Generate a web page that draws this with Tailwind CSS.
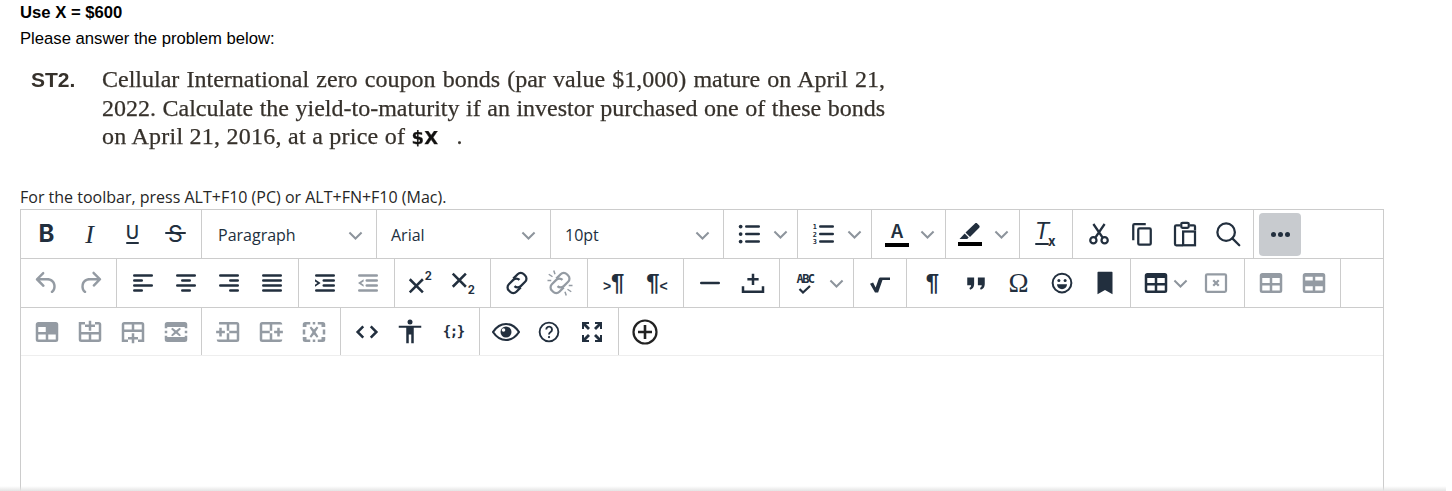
<!DOCTYPE html>
<html lang="en">
<head>
    <meta charset="UTF-8">
    <title>Use X = $600</title>
    <script src="https://cdn.jsdelivr.net/npm/@tailwindcss/browser@4"></script>
</head>
<body class="relative h-[491px] overflow-hidden bg-white text-black font-['Liberation_Sans',sans-serif]">

<!-- question text -->
<div class="pl-5 pt-px">
    <p class="h-6 leading-6 text-[16.67px] font-bold">Use X = $600</p>
    <p class="mt-[2px] h-6 leading-6 text-[16.67px]">Please answer the problem below:</p>
</div>

<!-- problem scan -->
<div class="mt-[14px] ml-[31px] flex h-[90px] text-[#36312b] blur-[0.3px]">
    <div class="w-[71px] pt-[1px] leading-[28px] text-[21px] font-bold">ST2.</div>
    <div class="w-[783px] font-['Liberation_Serif',serif] text-[24px] leading-[28.5px] [-webkit-text-stroke:0.25px_#36312b]">
        <p class="[text-align-last:justify]">Cellular International zero coupon bonds (par value $1,000) mature on April 21,</p>
        <p class="[text-align-last:justify]">2022. Calculate the yield-to-maturity if an investor purchased one of these bonds</p>
        <p class="tracking-[0.25px]">on April 21, 2016, at a price of <b class="font-['DejaVu_Sans',sans-serif] text-[18px] text-[#111]">$X</b><span class="ml-[18px]">.</span></p>
    </div>
</div>

<p class="mt-[30px] ml-5 h-6 leading-6 text-base font-['Open_Sans',sans-serif] text-[#262626]">For the toolbar, press ALT+F10 (PC) or ALT+FN+F10 (Mac).</p>

<!-- editor -->
<div class="ml-5 w-[1364px] h-[282px] border border-b-0 border-[#ccc] text-[#222f3e]">

    <!-- row 1 -->
    <div class="flex h-[49px] border-b border-[#ccc]">
        <div class="flex items-center w-[181px] px-1 border-r border-[#ccc]">
            <span class="w-[43.3px] flex justify-center text-[24px] font-bold font-['Inter',sans-serif]">B</span>
            <span class="w-[43.3px] flex justify-center text-[26px] italic font-['Liberation_Serif',serif]">I</span>
            <span class="w-[43.3px] flex flex-col items-center text-[18px] leading-[17px] font-medium font-['Inter',sans-serif]">U<i class="w-[13px] h-[2.5px] mt-[1px] rounded-sm bg-[#222f3e]"></i></span>
            <span class="relative w-[43.3px] flex justify-center text-[23px] font-['Inter',sans-serif]">S<i class="absolute left-[11px] top-[15px] w-[21px] h-[2px] rounded-sm bg-[#222f3e]"></i></span>
        </div>
        <div class="flex items-center justify-between w-[175px] pl-4 pr-3 pt-[2px] border-r border-[#ccc] font-['Open_Sans',sans-serif] text-base">
            <span>Paragraph</span>
            <svg width="17" height="17" viewBox="0 0 14 14" fill="none" stroke="#8d949c" stroke-width="1.6"><path d="M2 4.5l5 5 5-5"/></svg>
        </div>
        <div class="flex items-center justify-between w-[174px] pl-[14px] pr-[13px] pt-[2px] border-r border-[#ccc] font-['Open_Sans',sans-serif] text-base">
            <span>Arial</span>
            <svg width="17" height="17" viewBox="0 0 14 14" fill="none" stroke="#8d949c" stroke-width="1.6"><path d="M2 4.5l5 5 5-5"/></svg>
        </div>
        <div class="flex items-center justify-between w-[173px] pl-[14px] pr-3 pt-[2px] border-r border-[#ccc] font-['Open_Sans',sans-serif] text-base">
            <span>10pt</span>
            <svg width="17" height="17" viewBox="0 0 14 14" fill="none" stroke="#8d949c" stroke-width="1.6"><path d="M2 4.5l5 5 5-5"/></svg>
        </div>
        <div class="flex items-center w-[74px] pl-[11px] border-r border-[#ccc]">
            <svg width="30" height="30" viewBox="0 0 24 24" fill="currentColor"><circle cx="4.500" cy="6" r="1.500"/><circle cx="4.500" cy="12" r="1.500"/><circle cx="4.500" cy="18" r="1.500"/><rect x="8" y="5" width="12" height="2" rx="1"/><rect x="8" y="11" width="12" height="2" rx="1"/><rect x="8" y="17" width="12" height="2" rx="1"/></svg>
            <svg class="ml-[7px]" width="17" height="17" viewBox="0 0 14 14" fill="none" stroke="#8d949c" stroke-width="1.6"><path d="M2 4.5l5 5 5-5"/></svg>
        </div>
        <div class="flex items-center w-[74px] pl-[11px] border-r border-[#ccc]">
            <svg width="30" height="30" viewBox="0 0 24 24" fill="currentColor"><rect x="8" y="5" width="12" height="2" rx="1"/><rect x="8" y="11" width="12" height="2" rx="1"/><rect x="8" y="17" width="12" height="2" rx="1"/><text x="3" y="8" font-size="5.500" font-weight="700" font-family="DejaVu Sans Mono">1</text><text x="3" y="14" font-size="5.500" font-weight="700" font-family="DejaVu Sans Mono">2</text><text x="3" y="20" font-size="5.500" font-weight="700" font-family="DejaVu Sans Mono">3</text></svg>
            <svg class="ml-[7px]" width="17" height="17" viewBox="0 0 14 14" fill="none" stroke="#8d949c" stroke-width="1.6"><path d="M2 4.5l5 5 5-5"/></svg>
        </div>
        <div class="flex items-center w-[74px] pl-[13px] border-r border-[#ccc]">
            <span class="relative w-6 h-[25px] flex justify-center">
                <span class="text-[18px] leading-[20px] font-semibold font-['Inter',sans-serif]">A</span>
                <span class="absolute left-0 bottom-0 w-6 h-1 bg-black"></span>
            </span>
            <svg class="ml-[10px]" width="17" height="17" viewBox="0 0 14 14" fill="none" stroke="#8d949c" stroke-width="1.6"><path d="M2 4.5l5 5 5-5"/></svg>
        </div>
        <div class="flex items-center w-[74px] pl-3 border-r border-[#ccc]">
            <svg width="24" height="24" viewBox="0 0 24 24" fill="currentColor"><path d="M17 1.500c.6-.6 1.600-.6 2.200 0l2 2c.6.600.6 1.600 0 2.200L12 15l-4.500-4.500z"/><path d="M6.700 11.500l4 4-1.500 1.500H1.500z"/><rect x="0" y="20" width="24" height="4" fill="#000"/></svg>
            <svg class="ml-[11px]" width="17" height="17" viewBox="0 0 14 14" fill="none" stroke="#8d949c" stroke-width="1.6"><path d="M2 4.5l5 5 5-5"/></svg>
        </div>
        <div class="relative flex items-center justify-center w-[53px] border-r border-[#ccc]">
            <span class="absolute left-[15px] top-[8px] text-[23px] leading-[26px] italic font-['Liberation_Sans',sans-serif]">T</span>
            <i class="absolute left-[15px] top-[33px] w-[14px] h-[2px] rounded-sm bg-[#222f3e]"></i>
            <span class="absolute left-[28px] top-[24px] text-[13px] leading-[14px] font-bold font-['Inter',sans-serif]">x</span>
        </div>
        <div class="flex items-center w-[181px] px-1 border-r border-[#ccc]">
            <span class="w-[43.3px] flex justify-center"><svg width="30" height="30" viewBox="0 0 24 24" fill="none" stroke="currentColor" stroke-width="1.800"><circle cx="7.500" cy="17" r="2.500"/><circle cx="16.500" cy="17" r="2.500"/><path d="M9 15L16.500 4M15 15L7.500 4"/></svg></span>
            <span class="w-[43.3px] flex justify-center"><svg width="30" height="30" viewBox="0 0 24 24" fill="none" stroke="currentColor" stroke-width="1.800"><path d="M15 4H6a1 1 0 0 0-1 1v12"/><rect x="9" y="7.500" width="10" height="13" rx="1"/></svg></span>
            <span class="w-[43.3px] flex justify-center"><svg width="30" height="30" viewBox="0 0 24 24" fill="none" stroke="currentColor" stroke-width="1.800"><path d="M8 5H5a1 1 0 0 0-1 1v14a1 1 0 0 0 1 1h5M16 5h3a1 1 0 0 1 1 1v3"/><rect x="9" y="3" width="6" height="4" rx="1"/><rect x="10.500" y="10" width="9.500" height="11"/></svg></span>
            <span class="w-[43.3px] flex justify-center"><svg width="30" height="30" viewBox="0 0 24 24" fill="none" stroke="currentColor" stroke-width="1.800"><circle cx="10.500" cy="10.500" r="7"/><path d="M15.500 15.500l5.500 5.500" stroke-linecap="round"/></svg></span>
        </div>
        <div class="flex items-center pl-[5px]">
            <span class="w-[42px] h-[43px] flex items-center justify-center gap-[2px] rounded bg-[#c8cbcf]">
                <i class="w-[5px] h-[5px] rounded-full bg-[#222f3e]"></i><i class="w-[5px] h-[5px] rounded-full bg-[#222f3e]"></i><i class="w-[5px] h-[5px] rounded-full bg-[#222f3e]"></i>
            </span>
        </div>
    </div>

    <!-- row 2 -->
    <div class="flex h-[49px] border-b border-[#ccc]">
        <div class="flex items-center w-[96px] px-1 border-r border-[#ccc] text-[#949ba3]">
            <span class="w-[43.3px] flex justify-center"><svg width="30" height="30" viewBox="0 0 24 24" fill="currentColor"><path d="M6.400 8H12c3.700 0 6.200 2 6.800 5.100.6 2.700-.4 5.600-2.300 6.800a1 1 0 0 1-1-1.800c1.100-.6 1.800-2.700 1.400-4.600-.5-2.100-2.100-3.500-4.900-3.500H6.400l3.300 3.300a1 1 0 1 1-1.400 1.400l-5-5a1 1 0 0 1 0-1.400l5-5a1 1 0 0 1 1.400 1.400L6.400 8z"/></svg></span>
            <span class="w-[43.3px] flex justify-center"><svg width="30" height="30" viewBox="0 0 24 24" fill="currentColor"><path d="M17.600 10H12c-2.800 0-4.400 1.400-4.900 3.500-.4 2 .3 4 1.400 4.600a1 1 0 1 1-1 1.800c-2-1.200-2.900-4.100-2.300-6.800.6-3 3-5.100 6.800-5.100h5.600l-3.300-3.300a1 1 0 1 1 1.400-1.400l5 5a1 1 0 0 1 0 1.400l-5 5a1 1 0 0 1-1.400-1.400l3.300-3.300z"/></svg></span>
        </div>
        <div class="flex items-center w-[182px] px-1 border-r border-[#ccc]">
            <span class="w-[43.3px] flex justify-center"><svg width="30" height="30" viewBox="0 0 24 24" fill="currentColor"><rect x="4" y="5" width="16" height="2" rx="1"/><rect x="4" y="9" width="8" height="2" rx="1"/><rect x="4" y="13" width="16" height="2" rx="1"/><rect x="4" y="17" width="8" height="2" rx="1"/></svg></span>
            <span class="w-[43.3px] flex justify-center"><svg width="30" height="30" viewBox="0 0 24 24" fill="currentColor"><rect x="4" y="5" width="16" height="2" rx="1"/><rect x="8" y="9" width="8" height="2" rx="1"/><rect x="4" y="13" width="16" height="2" rx="1"/><rect x="8" y="17" width="8" height="2" rx="1"/></svg></span>
            <span class="w-[43.3px] flex justify-center"><svg width="30" height="30" viewBox="0 0 24 24" fill="currentColor"><rect x="4" y="5" width="16" height="2" rx="1"/><rect x="12" y="9" width="8" height="2" rx="1"/><rect x="4" y="13" width="16" height="2" rx="1"/><rect x="12" y="17" width="8" height="2" rx="1"/></svg></span>
            <span class="w-[43.3px] flex justify-center"><svg width="30" height="30" viewBox="0 0 24 24" fill="currentColor"><rect x="4" y="5" width="16" height="2" rx="1"/><rect x="4" y="9" width="16" height="2" rx="1"/><rect x="4" y="13" width="16" height="2" rx="1"/><rect x="4" y="17" width="16" height="2" rx="1"/></svg></span>
        </div>
        <div class="flex items-center w-[96px] px-1 border-r border-[#ccc]">
            <span class="w-[43.3px] flex justify-center"><svg width="30" height="30" viewBox="0 0 24 24" fill="currentColor"><rect x="4" y="5" width="16" height="2" rx="1"/><rect x="10" y="9" width="10" height="2" rx="1"/><rect x="10" y="13" width="10" height="2" rx="1"/><rect x="4" y="17" width="16" height="2" rx="1"/><path d="M4 9l4.500 3L4 15v-1.700L6 12 4 10.700z"/></svg></span>
            <span class="w-[43.3px] flex justify-center text-[#949ba3]"><svg width="30" height="30" viewBox="0 0 24 24" fill="currentColor"><rect x="4" y="5" width="16" height="2" rx="1"/><rect x="10" y="9" width="10" height="2" rx="1"/><rect x="10" y="13" width="10" height="2" rx="1"/><rect x="4" y="17" width="16" height="2" rx="1"/><path d="M8.500 9L4 12l4.500 3v-1.700L6.500 12l2-1.300z"/></svg></span>
        </div>
        <div class="flex items-center w-[96px] px-1 border-r border-[#ccc]">
            <span class="w-[43.3px] flex justify-center"><svg width="30" height="30" viewBox="0 0 24 24" fill="none" stroke="currentColor" stroke-width="2"><path d="M3 9l10.500 10.500M13.500 9L3 19.500"/><text x="15" y="9.500" fill="currentColor" stroke="none" font-size="9" font-weight="700" font-family="Inter">2</text></svg></span>
            <span class="w-[43.3px] flex justify-center"><svg width="30" height="30" viewBox="0 0 24 24" fill="none" stroke="currentColor" stroke-width="2"><path d="M3 4.500L13.500 15M13.500 4.500L3 15"/><text x="15" y="20.500" fill="currentColor" stroke="none" font-size="9" font-weight="700" font-family="Inter">2</text></svg></span>
        </div>
        <div class="flex items-center w-[97px] px-1 border-r border-[#ccc]">
            <span class="w-[43.3px] flex justify-center"><svg width="30" height="30" viewBox="0 0 24 24" fill="none" stroke="currentColor" stroke-width="1.800"><path d="M9 8.500l3.500-3.500a3.500 3.500 0 0 1 5 0l1 1a3.500 3.500 0 0 1 0 5L15 14.500a3.500 3.500 0 0 1-5 0"/><path d="M15 15.500L11.500 19a3.500 3.500 0 0 1-5 0l-1-1a3.500 3.500 0 0 1 0-5L9 9.500a3.500 3.500 0 0 1 5 0"/></svg></span>
            <span class="w-[43.3px] flex justify-center text-[#949ba3]"><svg width="30" height="30" viewBox="0 0 24 24" fill="none" stroke="currentColor" stroke-width="1.800"><path d="M9 8.500l3.500-3.500a3.500 3.500 0 0 1 5 0l1 1a3.500 3.500 0 0 1 0 5L15 14.500a3.500 3.500 0 0 1-5 0"/><path d="M15 15.500L11.500 19a3.500 3.500 0 0 1-5 0l-1-1a3.500 3.500 0 0 1 0-5L9 9.500a3.500 3.500 0 0 1 5 0"/><path stroke-width="1.200" d="M3 5l3 2M7 2l1 3M2 10h3M21 19l-3-2M17 22l-1-3M22 14h-3"/></svg></span>
        </div>
        <div class="flex items-center w-[96px] px-1 border-r border-[#ccc]">
            <span class="w-[43.3px] flex justify-center items-center font-bold text-[24px] leading-6"><span class="text-[14px] pt-[5px]">&gt;</span>¶</span>
            <span class="w-[43.3px] flex justify-center items-center font-bold text-[24px] leading-6">¶<span class="text-[14px] pt-[5px]">&lt;</span></span>
        </div>
        <div class="flex items-center w-[96px] px-1 border-r border-[#ccc]">
            <span class="w-[43.3px] flex justify-center"><svg width="30" height="30" viewBox="0 0 24 24" fill="currentColor"><rect x="4" y="11" width="16" height="2" rx="1"/></svg></span>
            <span class="w-[43.3px] flex justify-center"><svg width="30" height="30" viewBox="0 0 24 24" fill="currentColor"><path d="M11 4.500h2V8h3.500v2H13v3.500h-2V10H7.500V8H11z"/><path d="M3 14.500h2V18h14v-3.500h2V20H3z"/></svg></span>
        </div>
        <div class="flex items-center w-[74px] pl-[13px] border-r border-[#ccc]">
            <span class="w-6 flex flex-col items-center">
                <span class="text-[12px] leading-[12px] font-bold font-['DejaVu_Sans_Mono',monospace] tracking-[-1.5px]">ABC</span>
                <svg width="14" height="9" viewBox="0 0 14 9" fill="none" stroke="currentColor" stroke-width="2.200"><path d="M1.500 4l3.500 3.500 7-6.500"/></svg>
            </span>
            <svg class="ml-[11px]" width="17" height="17" viewBox="0 0 14 14" fill="none" stroke="#8d949c" stroke-width="1.6"><path d="M2 4.5l5 5 5-5"/></svg>
        </div>
        <div class="flex items-center justify-center w-[53px] border-r border-[#ccc]">
            <svg width="30" height="30" viewBox="0 0 24 24" fill="currentColor"><path d="M4 12.500l2.500-1 2 4L11 8.500c.3-.6.8-1 1.500-1H20v2h-6l-3.500 10H8z"/></svg>
        </div>
        <div class="flex items-center w-[224px] px-1 border-r border-[#ccc]">
            <span class="w-[43.3px] flex justify-center font-bold text-[24px] leading-6">¶</span>
            <span class="w-[43.3px] flex justify-center"><svg width="30" height="30" viewBox="0 0 24 24" fill="currentColor"><path d="M5 7.500h5.500v5.500c0 2.500-1.500 4-3.200 4.300l-.6-1.300c.9-.4 1.300-1 1.400-2.200H5zM13.500 7.500H19v5.500c0 2.500-1.500 4-3.200 4.300l-.6-1.300c.9-.4 1.300-1 1.400-2.200h-3.100z"/></svg></span>
            <span class="w-[43.3px] flex justify-center text-[27px] leading-6 font-['Liberation_Serif',serif]">Ω</span>
            <span class="w-[43.3px] flex justify-center"><svg width="30" height="30" viewBox="0 0 24 24"><circle cx="12" cy="12" r="7.500" fill="none" stroke="currentColor" stroke-width="1.600"/><circle cx="9.500" cy="10" r="1.200" fill="currentColor"/><circle cx="14.500" cy="10" r="1.200" fill="currentColor"/><path d="M8 13h8a4 4 0 0 1-8 0z" fill="currentColor"/></svg></span>
            <span class="w-[43.3px] flex justify-center"><svg width="30" height="30" viewBox="0 0 24 24" fill="currentColor"><path d="M6.500 3h11c.3 0 .5.200.5.500V21l-6-3.500L6 21V3.500c0-.3.200-.5.500-.5z"/></svg></span>
        </div>
        <div class="flex items-center w-[114px] pl-[10px] border-r border-[#ccc]">
            <svg width="30" height="30" viewBox="0 0 24 24" fill="currentColor"><path d="M19 4a2 2 0 0 1 2 2v12a2 2 0 0 1-2 2H5a2 2 0 0 1-2-2V6c0-1.100.9-2 2-2h14zM5 14v4h6v-4H5zm14 0h-6v4h6v-4zm0-6h-6v4h6V8zM5 12h6V8H5v4z"/></svg>
            <svg class="ml-[1px]" width="17" height="17" viewBox="0 0 14 14" fill="none" stroke="#8d949c" stroke-width="1.6"><path d="M2 4.5l5 5 5-5"/></svg>
            <svg class="ml-3 text-[#949ba3]" width="30" height="30" viewBox="0 0 24 24" fill="none" stroke="currentColor" stroke-width="1.800"><rect x="4" y="5" width="16" height="14" rx="1"/><path d="M9.800 9.800l4.400 4.400M14.200 9.800l-4.400 4.400"/></svg>
        </div>
        <div class="flex items-center w-[96px] px-1 border-r border-[#ccc] text-[#949ba3]">
            <span class="w-[43.3px] flex justify-center"><svg width="30" height="30" viewBox="0 0 24 24" fill="currentColor" fill-rule="evenodd"><path d="M19 4a2 2 0 0 1 2 2v12a2 2 0 0 1-2 2H5a2 2 0 0 1-2-2V6c0-1.100.9-2 2-2h14zM5 14v4h6v-4H5zm14 0h-6v4h6v-4zm0-6h-6v4h6V8zM5 12h6V8H5v4z"/></svg></span>
            <span class="w-[43.3px] flex justify-center"><svg width="30" height="30" viewBox="0 0 24 24" fill="currentColor" fill-rule="evenodd"><path d="M19 4a2 2 0 0 1 2 2v12a2 2 0 0 1-2 2H5a2 2 0 0 1-2-2V6c0-1.100.9-2 2-2h14zM5 7v3h6V7H5zm8 0v3h6V7h-6zM5 14.500V18h6v-3.500H5zm8 0V18h6v-3.500h-6z"/></svg></span>
        </div>
    </div>

    <!-- row 3 -->
    <div class="flex h-[48px] border-b border-[#eee]">
        <div class="flex items-center w-[181px] px-1 border-r border-[#ccc] text-[#949ba3]">
            <span class="w-[43.3px] flex justify-center"><svg width="30" height="30" viewBox="0 0 24 24" fill="currentColor" fill-rule="evenodd"><path d="M19 4a2 2 0 0 1 2 2v12a2 2 0 0 1-2 2H5a2 2 0 0 1-2-2V6c0-1.100.9-2 2-2h14zM5 14v4h6v-4H5zm14 0h-6v4h6v-4zM5 12h6V8H5v4z"/></svg></span>
            <span class="w-[43.3px] flex justify-center"><svg width="30" height="30" viewBox="0 0 24 24" fill="currentColor" fill-rule="evenodd"><path d="M3 4h5v2H5v6h14V6h-3V4h3a2 2 0 0 1 2 2v12a2 2 0 0 1-2 2H5a2 2 0 0 1-2-2zM5 14v4h6v-4zm8 0v4h6v-4z"/><path d="M11 3h2v3h3v2h-3v3h-2V8H8V6h3z"/></svg></span>
            <span class="w-[43.3px] flex justify-center"><svg width="30" height="30" viewBox="0 0 24 24" fill="currentColor" fill-rule="evenodd"><path d="M5 4h14a2 2 0 0 1 2 2v14h-5v-2h3v-6H5v6h3v2H3V6a2 2 0 0 1 2-2zm0 2v4h6V6zm8 0v4h6V6z"/><path d="M11 13h2v3h3v2h-3v3h-2v-3H8v-2h3z"/></svg></span>
            <span class="w-[43.3px] flex justify-center"><svg width="30" height="30" viewBox="0 0 24 24" fill="currentColor"><path d="M5 4h14a2 2 0 0 1 2 2v3h-2V8H5v1H3V6a2 2 0 0 1 2-2zM3 11h2v2H3zM19 11h2v2h-2zM3 15h2v1h14v-1h2v3a2 2 0 0 1-2 2H5a2 2 0 0 1-2-2z"/><path d="M8 9.500l1.200-.9 2.800 2.200 2.800-2.200 1.200.9-2.600 2.500 2.600 2.500-1.200.9-2.800-2.200-2.800 2.200-1.200-.9 2.600-2.500z"/></svg></span>
        </div>
        <div class="flex items-center w-[139px] px-1 border-r border-[#ccc] text-[#949ba3]">
            <span class="w-[43.3px] flex justify-center"><svg width="30" height="30" viewBox="0 0 24 24" fill="currentColor" fill-rule="evenodd"><path d="M5 4h14a2 2 0 0 1 2 2v12a2 2 0 0 1-2 2H5a2 2 0 0 1-2-2h8v-5h2v5h6v-5h-6v-2h6V6h-6v5h-2V6H5a2 2 0 0 1 0-2z"/><path d="M5 8.500h2V11h2.500v2H7v2.500H5V13H2.500v-2H5z"/></svg></span>
            <span class="w-[43.3px] flex justify-center"><svg width="30" height="30" viewBox="0 0 24 24" fill="currentColor" fill-rule="evenodd"><path d="M5 4h14a2 2 0 0 1 2 2H13v5h-2V6H5v5h6v2H5v5h6v-5h2v5h8a2 2 0 0 1-2 2H5a2 2 0 0 1-2-2V6a2 2 0 0 1 2-2z"/><path d="M17 8.500h2V11h2.500v2H19v2.500h-2V13h-2.500v-2H17z"/></svg></span>
            <span class="w-[43.3px] flex justify-center"><svg width="30" height="30" viewBox="0 0 24 24" fill="currentColor"><path d="M5 4h4v2H6v2H3V6a2 2 0 0 1 2-2zM11 4h2v2h-2zM15 4h4a2 2 0 0 1 2 2v2h-3V6h-3zM3 10h2v4H3zM19 10h2v4h-2zM3 16h3v2h3v2H5a2 2 0 0 1-2-2zM11 18h2v2h-2zM18 16h3v2a2 2 0 0 1-2 2h-4v-2h3z"/><path d="M8.500 8.500l1.200-1L12 10l2.300-2.500 1.200 1L13.200 12l2.300 3.500-1.200 1L12 14l-2.300 2.500-1.200-1 2.300-3.500z"/></svg></span>
        </div>
        <div class="flex items-center w-[139px] px-1 border-r border-[#ccc]">
            <span class="w-[43.3px] flex justify-center"><svg width="30" height="30" viewBox="0 0 24 24" fill="none" stroke="currentColor" stroke-width="2"><path d="M9 7.500L4.500 12 9 16.500M15 7.500l4.500 4.500-4.500 4.500"/></svg></span>
            <span class="w-[43.3px] flex justify-center"><svg width="30" height="30" viewBox="0 0 24 24" fill="currentColor"><circle cx="12" cy="4" r="2"/><path d="M3 7h18v1.600h-6V21h-2v-7h-2v7H9V8.600H3z"/></svg></span>
            <span class="w-[43.3px] flex justify-center text-[14px] font-bold font-['DejaVu_Sans_Mono',monospace] tracking-[-1.5px]">{;}</span>
        </div>
        <div class="flex items-center w-[139px] px-1 border-r border-[#ccc]">
            <span class="w-[43.3px] flex justify-center"><svg width="28" height="24" viewBox="0 0 28 24"><path d="M1 12C5 6 9 4 14 4s9 2 13 8c-4 6-8 8-13 8S5 18 1 12z" fill="none" stroke="currentColor" stroke-width="2.200"/><circle cx="14" cy="12" r="5.500" fill="currentColor"/><circle cx="11.500" cy="10" r="1.800" fill="#fff"/></svg></span>
            <span class="w-[43.3px] flex justify-center"><svg width="30" height="30" viewBox="0 0 24 24"><circle cx="12" cy="12" r="7.500" fill="none" stroke="currentColor" stroke-width="1.500"/><path d="M9.800 10a2.300 2.300 0 1 1 3.500 2c-.9.600-1.300 1-1.300 2" fill="none" stroke="currentColor" stroke-width="1.500"/><circle cx="12" cy="16" r=".9" fill="currentColor"/></svg></span>
            <span class="w-[43.3px] flex justify-center"><svg width="24" height="24" viewBox="0 0 24 24" fill="currentColor"><path d="M2 2h7v2H6l4 4-2 2-4-4v3H2zM22 2v7h-2V6l-4 4-2-2 4-4h-3V2zM2 22v-7h2v3l4-4 2 2-4 4h3v2zM22 22h-7v-2h3l-4-4 2-2 4 4v-3h2z"/></svg></span>
        </div>
        <div class="flex items-center pl-[13px] text-[#222]">
            <svg width="26" height="26" viewBox="0 0 26 26" fill="none" stroke="currentColor" stroke-width="2.200"><circle cx="13" cy="13" r="11.500"/><path d="M13 6v14M6 13h14" stroke-width="2.600"/></svg>
        </div>
    </div>
</div>

<!-- bottom shadow of the frame -->
<div class="absolute left-0 right-[6px] bottom-0 h-[5px] bg-gradient-to-b from-transparent to-[#e4e4e4]"></div>

</body>
</html>
